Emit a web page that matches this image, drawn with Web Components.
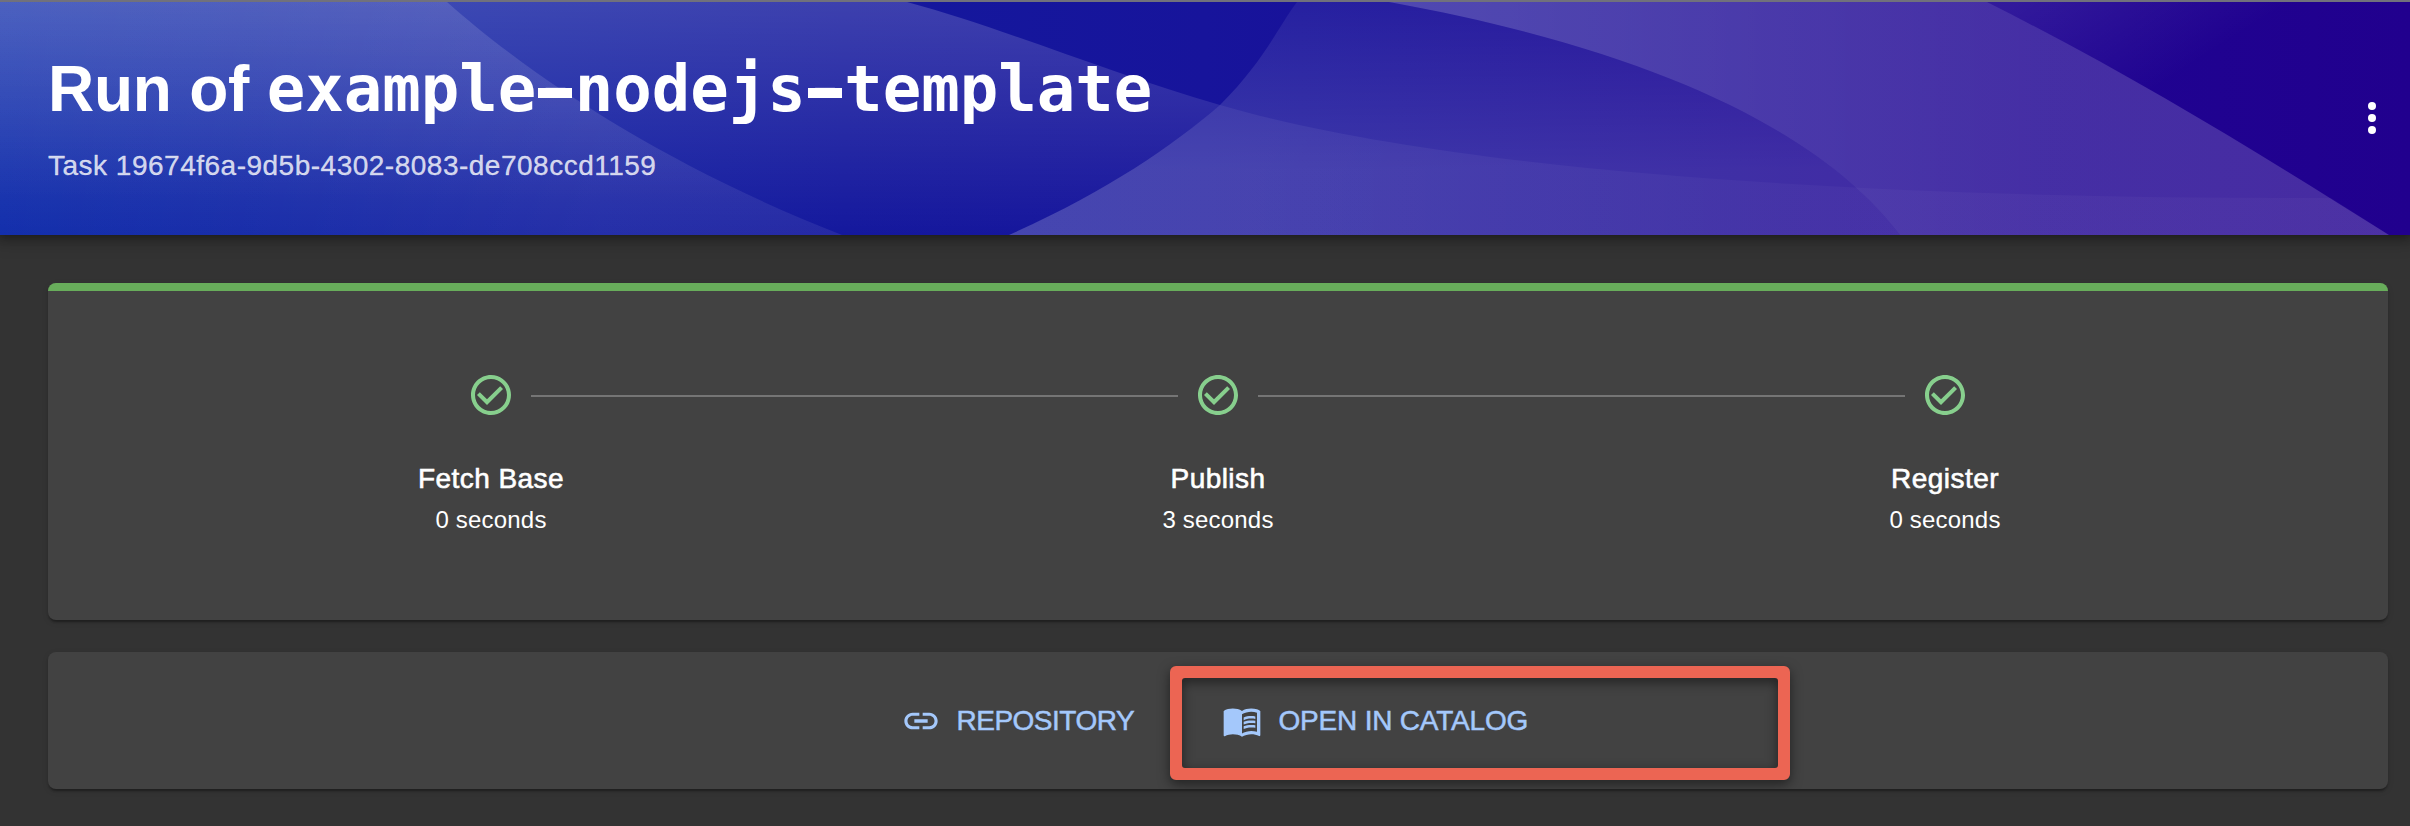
<!DOCTYPE html>
<html lang="en"><head><meta charset="utf-8"><title>Run of example-nodejs-template</title>
<style>
html,body{margin:0;height:100%}
body{background:#333;color:#fff;font-family:"Liberation Sans",Arial,sans-serif;overflow:hidden}
code{font-family:"DejaVu Sans Mono",monospace;letter-spacing:-.03px}
.dash{display:inline-block;position:relative}
.dash::after{content:"";position:absolute;left:2px;top:37px;width:34px;height:10px;background:#fff}
</style></head><body>
<task-page>
 <page-header slot="header">
  <span slot="title"><span style="letter-spacing:-.25px">Run of </span><code>example<span class="dash">-</span>nodejs<span class="dash">-</span>template</code></span>
  <span slot="subtitle">Task 19674f6a-9d5b-4302-8083-de708ccd1159</span>
 </page-header>
 <surface-card accent style="height:337px">
  <step-list>
   <step-item label="Fetch Base" time="0 seconds"></step-item>
   <step-item label="Publish" time="3 seconds" line></step-item>
   <step-item label="Register" time="0 seconds" line></step-item>
  </step-list>
 </surface-card>
 <surface-card style="height:137px">
  <link-bar>
   <link-button icon="link" style="--ls:-.5px;--gap:15.5px">REPOSITORY</link-button>
   <link-button icon="book" style="--ls:-.2px;--gap:16.5px" highlight>OPEN IN CATALOG</link-button>
  </link-bar>
 </surface-card>
</task-page>
<script>
const define = (name, html, setup) => customElements.define(name, class extends HTMLElement {
  constructor() { super(); this.attachShadow({mode: 'open'}); }
  connectedCallback() {
    this.shadowRoot.innerHTML = html;
    if (setup) setup(this, this.shadowRoot);
  }
});

define('task-page', `<style>
:host{display:block}
main{display:flex;flex-direction:column;gap:32px;padding:48px 22px 0 48px}
</style><slot name="header"></slot><main><slot></slot></main>`);

define('page-header', `<style>
:host{display:grid;height:235px;box-sizing:border-box;border-top:2px solid #71717c;position:relative;
 box-shadow:0 0 16px 6px rgba(0,0,0,.28),0 2px 8px rgba(0,0,0,.25)}
svg.bg{grid-area:1/1;width:100%;height:233px;display:block}
.row{grid-area:1/1;display:flex;justify-content:space-between;align-items:center;padding:0 14px 0 48px;z-index:1}
.text{align-self:start;padding-top:49px}
h1{margin:0;font-size:64px;line-height:76px;height:76px;font-weight:700;white-space:nowrap}
p{margin:21px 0 0;font-size:28px;line-height:36px;letter-spacing:.5px;color:rgba(255,255,255,.8);-webkit-text-stroke:.4px rgba(255,255,255,.6)}
.more{width:48px;height:48px;display:block;margin-bottom:1px}
</style>
<svg class="bg" viewBox="0 2 2410 233" preserveAspectRatio="none">
<defs>
<linearGradient id="base"><stop offset="0" stop-color="#112dab"/><stop offset=".35" stop-color="#14189d"/><stop offset=".5" stop-color="#17149b"/><stop offset=".8" stop-color="#1e0593"/><stop offset="1" stop-color="#21008e"/></linearGradient>
<linearGradient id="a" gradientUnits="userSpaceOnUse" x1="0" y1="0" x2="600" y2="0"><stop offset="0" stop-color="#fff" stop-opacity=".01"/><stop offset=".4" stop-color="#fff" stop-opacity=".03"/><stop offset="1" stop-color="#fff" stop-opacity=".075"/></linearGradient>
<linearGradient id="a2" gradientUnits="userSpaceOnUse" x1="0" y1="2" x2="0" y2="200"><stop offset="0" stop-color="#fff" stop-opacity=".08"/><stop offset="1" stop-color="#fff" stop-opacity="0"/></linearGradient>
<linearGradient id="b" gradientUnits="userSpaceOnUse" x1="0" y1="2" x2="0" y2="235"><stop offset="0" stop-color="#fff" stop-opacity=".175"/><stop offset="1" stop-color="#fff" stop-opacity="0"/></linearGradient>
<linearGradient id="c" gradientUnits="userSpaceOnUse" x1="0" y1="2" x2="0" y2="170"><stop offset="0" stop-color="#fff" stop-opacity=".06"/><stop offset="1" stop-color="#fff" stop-opacity=".155"/></linearGradient>
<linearGradient id="d" gradientUnits="userSpaceOnUse" x1="1250" y1="0" x2="2200" y2="0"><stop offset="0" stop-color="#fff" stop-opacity=".06"/><stop offset=".5" stop-color="#fff" stop-opacity=".03"/><stop offset="1" stop-color="#fff" stop-opacity=".03"/></linearGradient>
<linearGradient id="e" gradientUnits="userSpaceOnUse" x1="1480" y1="0" x2="2050" y2="0"><stop offset="0" stop-color="#fff" stop-opacity=".235"/><stop offset=".5" stop-color="#fff" stop-opacity=".2"/><stop offset="1" stop-color="#fff" stop-opacity=".17"/></linearGradient>
<linearGradient id="f" gradientUnits="userSpaceOnUse" x1="2020" y1="0" x2="2100" y2="125"><stop offset="0" stop-color="#fff" stop-opacity=".085"/><stop offset="1" stop-color="#fff" stop-opacity="0"/></linearGradient>
</defs>
<rect y="2" width="2410" height="233" fill="url(#base)"/>
<path fill="url(#b)" d="M0 2H907C1000 27 1110 73 1220 105C1170 148 1105 192 1009 235H0Z"/>
<path fill="url(#a)" d="M0 2H447C530 76 665 166 842 235H0Z"/>
<path fill="url(#a2)" d="M0 2H447C530 76 665 166 842 235H0Z"/>
<path fill="url(#c)" d="M1297 2C1278 27 1265 60 1220 105C1170 148 1105 192 1009 235H1900C1830 143 1680 55 1389 2Z"/>
<path fill="url(#e)" d="M1389 2H1987C2140 79 2265 157 2389 235H1900C1830 143 1680 55 1389 2Z"/>
<path fill="url(#d)" d="M1220 105C1460 175 1900 199 2331 198L2389 235H1009C1105 192 1170 148 1220 105Z"/>
<path fill="url(#f)" d="M1987 2H2410V235H2389C2265 157 2140 79 1987 2Z"/>
</svg>
<div class="row"><div class="text"><h1><slot name="title"></slot></h1><p><slot name="subtitle"></slot></p></div>
<svg class="more" viewBox="0 0 24 24" fill="#fff"><circle cx="12" cy="6" r="2"/><circle cx="12" cy="12" r="2"/><circle cx="12" cy="18" r="2"/></svg></div>`);

define('surface-card', `<style>
:host{display:flex;flex-direction:column;box-sizing:border-box;background:#424242;border-radius:8px;overflow:hidden;
 box-shadow:0 4px 2px -2px rgba(0,0,0,.2),0 2px 2px rgba(0,0,0,.14),0 2px 6px rgba(0,0,0,.12)}
:host([accent])::before{content:"";height:8px;background:#68ad5b}
</style><slot></slot>`);

define('step-list', `<style>
:host{display:grid;grid-template-columns:repeat(3,727px);justify-content:center;padding-top:80px}
</style><slot></slot>`);

define('step-item', `<style>
:host{display:flex;flex-direction:column;align-items:center;position:relative}
svg{width:48px;height:48px;fill:#87cf8d;display:block}
:host([line])::before{content:"";position:absolute;height:2px;background:#757575;top:24px;left:-323.5px;width:647px}
b{font-weight:400;font-size:28px;line-height:34px;letter-spacing:.45px;margin-top:43px;-webkit-text-stroke:.6px #fff}
span{font-size:24px;line-height:30px;margin-top:9px;letter-spacing:.2px}
</style>
<svg viewBox="0 0 24 24"><path d="M16.59 7.58L10 14.17l-3.59-3.58L5 12l5 5 8-8zM12 2C6.48 2 2 6.48 2 12s4.48 10 10 10 10-4.48 10-10S17.52 2 12 2zm0 18c-4.42 0-8-3.58-8-8s3.58-8 8-8 8 3.58 8 8-3.58 8-8 8z"/></svg>
<b></b><span></span>`, (el, root) => {
  root.querySelector('b').textContent = el.getAttribute('label');
  root.querySelector('span').textContent = el.getAttribute('time');
});

define('link-bar', `<style>
:host{display:grid;grid-template-columns:321px 321px;height:137px;padding-left:853px;align-items:center}
</style><slot></slot>`);

const icons = {
  link: 'M3.9 12c0-1.71 1.39-3.1 3.1-3.1h4V7H7c-2.76 0-5 2.24-5 5s2.24 5 5 5h4v-1.9H7c-1.71 0-3.1-1.39-3.1-3.1zM8 13h8v-2H8v2zm9-6h-4v1.9h4c1.71 0 3.1 1.39 3.1 3.1s-1.39 3.1-3.1 3.1h-4V17h4c2.76 0 5-2.24 5-5s-2.24-5-5-5z',
  book: 'M17.5 4.5c-1.95 0-4.05.4-5.5 1.5-1.45-1.1-3.55-1.5-5.5-1.5S2.45 4.9 1 6v14.65c0 .25.25.5.5.5.1 0 .15-.05.25-.05C3.1 20.45 5.05 20 6.5 20c1.95 0 4.05.4 5.5 1.5 1.35-.85 3.8-1.5 5.5-1.5 1.65 0 3.35.3 4.75 1.05.1.05.15.05.25.05.25 0 .5-.25.5-.5V6c-.6-.45-1.25-.75-2-1-1.11-.35-2.33-.5-3.5-.5zm3.5 14c-1.1-.35-2.3-.5-3.5-.5-1.7 0-4.15.65-5.5 1.5V8c1.35-.85 3.8-1.5 5.5-1.5 1.2 0 2.4.15 3.5.5v11.5zM17.5 10.5c.88 0 1.73.09 2.5.26V9.24c-.79-.15-1.64-.24-2.5-.24-1.7 0-3.24.29-4.5.83v1.66c1.13-.64 2.7-.99 4.5-.99zM13 12.49v1.66c1.13-.64 2.7-.99 4.5-.99.88 0 1.73.09 2.5.26V11.9c-.79-.15-1.64-.24-2.5-.24-1.7 0-3.24.3-4.5.83zm4.5 1.84c-1.7 0-3.24.29-4.5.83v1.66c1.13-.64 2.7-.99 4.5-.99.88 0 1.73.09 2.5.26v-1.52c-.79-.16-1.64-.24-2.5-.24z'
};
define('link-button', `<style>
:host{display:flex;align-items:center;position:relative;color:#a4c8fb;height:40px}
svg{width:40px;height:40px;fill:currentColor;flex:none}
span{margin-left:var(--gap,16px);font-size:28px;line-height:40px;white-space:nowrap;letter-spacing:var(--ls,0);-webkit-text-stroke:.5px currentColor}
:host([highlight])::after{content:"";position:absolute;box-sizing:border-box;left:-52px;top:-35px;width:620px;height:114px;border:12px solid #ec6553;border-radius:6px;filter:drop-shadow(0 4px 6px rgba(0,0,0,.5))}
:host([highlight])::before{content:"";position:absolute;box-sizing:border-box;left:-42px;top:-25px;width:600px;height:94px;border:2px solid #ec6553;border-radius:5px;z-index:1}
</style><svg viewBox="0 0 24 24"><path/></svg><span><slot></slot></span>`, (el, root) => {
  root.querySelector('path').setAttribute('d', icons[el.getAttribute('icon')]);
});
</script></body></html>
